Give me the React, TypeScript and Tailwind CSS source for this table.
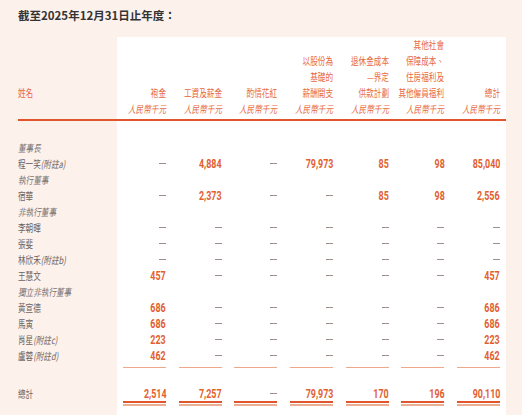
import React from "react";

const heads: string[][] = [
  ["袍金"],
  ["工資及薪金"],
  ["酌情花紅"],
  ["以股份為", "基礎的", "薪酬開支"],
  ["退休金成本", "—界定", "供款計劃"],
  ["其他社會", "保障成本、", "住房福利及", "其他僱員福利"],
  ["總計"],
];

const D = "—";

type Row = { name: string; note?: string; italic?: boolean; vals?: string[] };

const rows: Row[] = [
  { name: "董事長", italic: true },
  { name: "程一笑", note: "(附註a)", vals: [D, "4,884", D, "79,973", "85", "98", "85,040"] },
  { name: "執行董事", italic: true },
  { name: "宿華", vals: [D, "2,373", D, D, "85", "98", "2,556"] },
  { name: "非執行董事", italic: true },
  { name: "李朝暉", vals: [D, D, D, D, D, D, D] },
  { name: "張斐", vals: [D, D, D, D, D, D, D] },
  { name: "林欣禾", note: "(附註b)", vals: [D, D, D, D, D, D, D] },
  { name: "王慧文", vals: ["457", D, D, D, D, D, "457"] },
  { name: "獨立非執行董事", italic: true },
  { name: "黃宣德", vals: ["686", D, D, D, D, D, "686"] },
  { name: "馬寅", vals: ["686", D, D, D, D, D, "686"] },
  { name: "肖星", note: "(附註c)", vals: ["223", D, D, D, D, D, "223"] },
  { name: "盧蓉", note: "(附註d)", vals: ["462", D, D, D, D, D, "462"] },
];

const totals = ["2,514", "7,257", D, "79,973", "170", "196", "90,110"];

const grid = "grid grid-cols-[repeat(7,43px)] gap-x-[12.67px] px-[6px]";

// condensed CJK label, scaled from the given side
function Cjk({ children, right, className = "" }: { children: React.ReactNode; right?: boolean; className?: string }) {
  return (
    <span
      className={
        "inline-block scale-x-[0.76] text-[10px] leading-[16px] whitespace-nowrap " +
        (right ? "origin-right " : "origin-left ") +
        className
      }
    >
      {children}
    </span>
  );
}

function Val({ v, lh = "leading-[16px]" }: { v: string; lh?: string }) {
  if (v === D) {
    return <span className="inline-block w-[7px] h-[1.5px] bg-[#9d8f89] mb-[1px]" />;
  }
  return (
    <span className={"inline-block origin-right scale-x-[0.74] font-['Roboto',sans-serif] text-[12px] font-bold text-[#e2602f] whitespace-nowrap " + lh}>
      {v}
    </span>
  );
}

export default function App() {
  return (
    <div className="w-[522px] h-[415px] overflow-hidden bg-[#fdf1ec] font-['Noto_Sans_CJK_TC',sans-serif]">
      <div className="h-[37px] pl-[18px] pt-[7px] text-[11.5px] leading-[16px] font-bold text-[#333333]">
        截至2025年12月31日止年度：
      </div>

      <div className="flex pl-[18px] h-[378px]">
        {/* name column */}
        <div className="w-[99px]">
          <div className="h-[84px] pb-[2px] border-b-2 border-[#e0552b] flex flex-col justify-end">
            <div className="h-[16px] mb-[16px] flex items-center text-[#e8683c]">
              <Cjk>姓名</Cjk>
            </div>
          </div>
          <div className="mt-[19px]">
            {rows.map((r) => (
              <div key={r.name} className={"h-[16px] flex items-center " + (r.italic ? "text-[#7a7472]" : "text-[#6b6461]")}>
                <Cjk className={r.italic ? "italic" : ""}>
                  {r.name}
                  {r.note && <span className="italic">{r.note}</span>}
                </Cjk>
              </div>
            ))}
          </div>
          <div className="mt-[23px] h-[14px] flex items-center text-[#6b6461]">
            <Cjk>總計</Cjk>
          </div>
        </div>

        {/* figures */}
        <div className="w-[389px] bg-white">
          <div className="h-[84px] pb-[2px] border-b-2 border-[#e0552b]">
            <div className={grid + " h-[80px] items-end"}>
              {heads.map((h, i) => (
                <div key={i} className="flex flex-col items-end text-[#e8683c]">
                  {h.map((l) => (
                    <div key={l} className="h-[16px] flex items-center justify-end">
                      <Cjk right>{l}</Cjk>
                    </div>
                  ))}
                  <div className="h-[16px] flex items-center justify-end">
                    <Cjk right className="italic">人民幣千元</Cjk>
                  </div>
                </div>
              ))}
            </div>
          </div>

          <div className="mt-[19px]">
            {rows.map((r) => (
              <div key={r.name} className={grid + " h-[16px]"}>
                {r.vals
                  ? r.vals.map((v, i) => (
                      <div key={i} className="h-[16px] flex justify-end items-center">
                        <Val v={v} />
                      </div>
                    ))
                  : null}
              </div>
            ))}
            <div className={grid}>
              {totals.map((_, i) => (
                <div key={i} className="h-[4px] border-b border-[#f0a88c]" />
              ))}
            </div>
            <div className={grid + " mt-[19px]"}>
              {totals.map((v, i) => (
                <div key={i}>
                  <div className="h-[16px] border-b-2 border-[#e0552b] flex justify-end items-center">
                    <Val v={v} lh="leading-[14px]" />
                  </div>
                  <div className="mt-[1px] h-[2px] bg-[#e9b095]" />
                </div>
              ))}
            </div>
          </div>
        </div>
      </div>
    </div>
  );
}
